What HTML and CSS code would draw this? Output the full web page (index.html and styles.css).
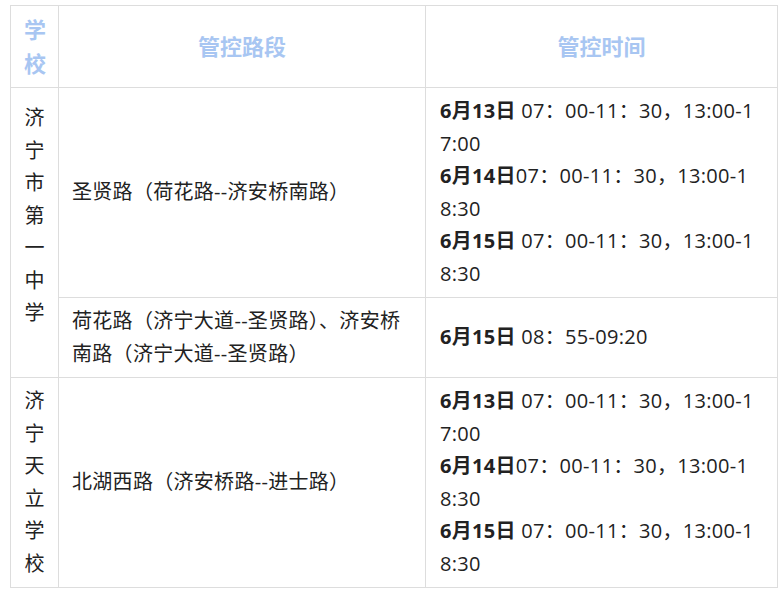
FILE: index.html
```html
<!DOCTYPE html>
<html lang="zh-CN">
<head>
<meta charset="utf-8">
<title>管控路段</title>
<link rel="stylesheet" href="styles.css">
</head>
<body>
<table class="grid">
  <colgroup>
    <col class="col-school">
    <col class="col-road">
    <col class="col-time">
  </colgroup>
  <thead>
    <tr>
      <th class="head head--school">学校</th>
      <th class="head">管控路段</th>
      <th class="head">管控时间</th>
    </tr>
  </thead>
  <tbody>
    <tr>
      <td class="school school--tall" rowspan="2">济宁市第一中学</td>
      <td class="road">圣贤路（荷花路--济安桥南路）</td>
      <td class="time"><b>6月13日</b> 07：00-11：30，13:00-17:00<br><b>6月14日</b>07：00-11：30，13:00-18:30<br><b>6月15日</b> 07：00-11：30，13:00-18:30</td>
    </tr>
    <tr>
      <td class="road">荷花路（济宁大道--圣贤路）、济安桥南路（济宁大道--圣贤路）</td>
      <td class="time"><b>6月15日</b> 08：55-09:20</td>
    </tr>
    <tr>
      <td class="school">济宁天立学校</td>
      <td class="road">北湖西路（济安桥路--进士路）</td>
      <td class="time"><b>6月13日</b> 07：00-11：30，13:00-17:00<br><b>6月14日</b>07：00-11：30，13:00-18:30<br><b>6月15日</b> 07：00-11：30，13:00-18:30</td>
    </tr>
  </tbody>
</table>
</body>
</html>
```

FILE: styles.css
```css
html, body {
  margin: 0;
  padding: 0;
  background: #ffffff;
}

body {
  font-family: "Open Sans", "Noto Sans CJK SC", sans-serif;
  color: #222222;
  font-size: 20px;
}

.grid {
  margin: 5px 0 0 10px;
  width: 767px;
  table-layout: fixed;
  border-collapse: collapse;
}

.col-school { width: 48px; }
.col-road { width: 367px; }
.col-time { width: 352px; }

.grid th,
.grid td {
  border: 1px solid #dddddd;
  vertical-align: middle;
}

.head {
  font-size: 22px;
  font-weight: bold;
  line-height: 33.5px;
  color: #a8c6f2;
  text-align: center;
  padding: 7px 12px;
}

.head--school {
  padding: 7px 13px;
  word-break: break-all;
}

.school {
  text-align: center;
  line-height: 32.5px;
  padding: 7px 13px;
  word-break: break-all;
}

.school--tall {
  padding-bottom: 40px;
}

.road {
  line-height: 32.5px;
  padding: 7px 14px 7px 13px;
  letter-spacing: 0.3px;
}

.time {
  line-height: 32.5px;
  padding: 7px 18px 7px 14px;
  word-break: break-all;
  letter-spacing: 0.3px;
}

.time b {
  font-weight: bold;
}
```
